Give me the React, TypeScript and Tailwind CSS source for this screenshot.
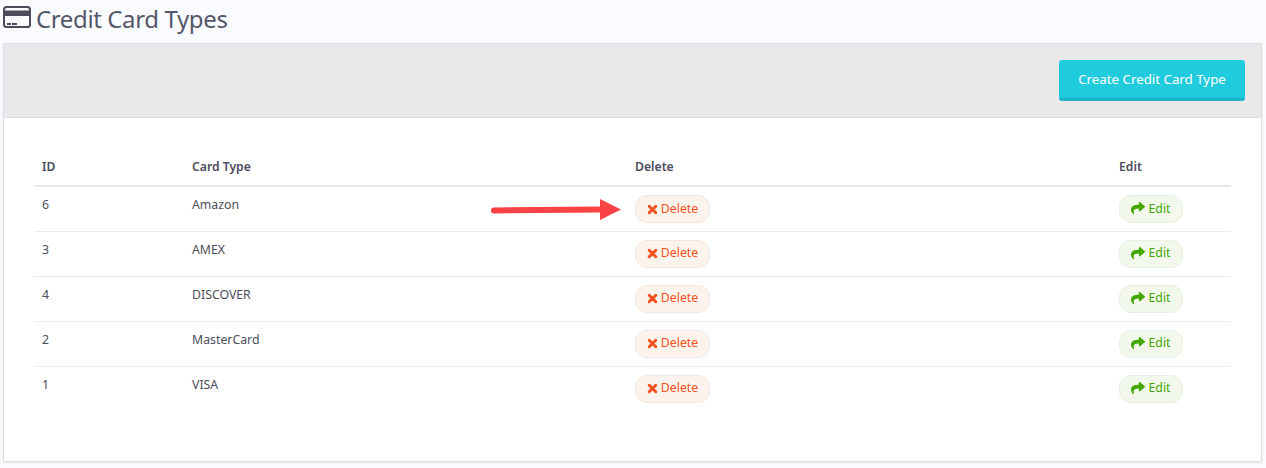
import { FaShare } from 'react-icons/fa';

const rows = [
  { id: 6, type: 'Amazon' },
  { id: 3, type: 'AMEX' },
  { id: 4, type: 'DISCOVER' },
  { id: 2, type: 'MasterCard' },
  { id: 1, type: 'VISA' },
];

function CardIcon() {
  return (
    <svg viewBox="0 0 28 22" className="h-[22px] w-[28px] shrink-0">
      <rect x="1" y="1" width="26" height="20" rx="2.5" fill="none" stroke="#4b4d5c" strokeWidth="2" />
      <rect x="1" y="4.5" width="26" height="5.5" fill="#4b4d5c" />
      <rect x="4" y="17" width="4" height="2" fill="#4b4d5c" />
      <rect x="9" y="17" width="5" height="2" fill="#4b4d5c" />
    </svg>
  );
}

function CrossIcon() {
  return (
    <svg viewBox="0 0 12 12" className="h-[11px] w-[11px] shrink-0">
      <path d="M2.4 2.4 L9.6 9.6 M9.6 2.4 L2.4 9.6" stroke="currentColor" strokeWidth="3.2" strokeLinecap="round" />
    </svg>
  );
}

function ArrowMark() {
  return (
    <svg viewBox="0 0 132 22" className="absolute left-[490px] top-[199px] h-[22px] w-[132px]">
      <path d="M4 11.5 L110 10.5" stroke="#fb4245" strokeWidth="6" strokeLinecap="round" fill="none" />
      <polygon points="110,0 131,10.5 110,21" fill="#fb4245" />
    </svg>
  );
}

export default function App() {
  return (
    <div className="relative h-[468px] w-[1266px] overflow-hidden bg-[#f9fbfe] font-['Noto_Sans',sans-serif] text-[#4b4d5c]">
      <div className="flex h-[43px] items-start gap-[5px] pl-[3px] pt-[6px]">
        <CardIcon />
        <h1 className="text-[24px] leading-[26px] font-normal tracking-[-0.38px] text-[#55576a]">Credit Card Types</h1>
      </div>

      <div className="ml-[3px] h-[419px] w-[1259px] border border-[#dcdfe3] bg-white shadow-[0_1px_3px_rgba(0,0,0,0.08)]">
        <div className="flex h-[74px] items-center justify-end border-b border-[#dedede] bg-[#e9e9e9] pr-[16px]">
          <button
            type="button"
            className="h-[41px] w-[186px] rounded-[3px] border-b-[3px] border-[#1cb3c4] bg-[#20cbdd] pt-[2px] text-[13.3px] text-white"
          >
            Create Credit Card Type
          </button>
        </div>

        <div className="px-[30px] pt-[30px]">
          <table className="w-[1197px] table-fixed border-collapse text-left text-[12.3px]">
            <thead>
              <tr className="h-[38px] border-b-2 border-[#e9e9e9] text-[12.2px] font-semibold">
                <th className="w-[150px] pl-[8px] pt-[2px] font-semibold">ID</th>
                <th className="w-[443px] pl-[8px] pt-[2px] font-semibold">Card Type</th>
                <th className="w-[484px] pl-[8px] pt-[2px] font-semibold">Delete</th>
                <th className="pl-[8px] pt-[2px] font-semibold">Edit</th>
              </tr>
            </thead>
            <tbody>
              {rows.map((row) => (
                <tr key={row.id} className="h-[45px] border-b border-[#ececec] last:border-b-0">
                  <td className="pl-[8px] align-top pt-[9px] leading-[18px]">{row.id}</td>
                  <td className="pl-[8px] align-top pt-[9px] leading-[18px]">{row.type}</td>
                  <td className="pl-[8px] align-top pt-[8px]">
                    <button
                      type="button"
                      className="flex h-[28px] w-[75px] items-center justify-center gap-[3px] rounded-[12px] border border-[#f5e6dd] bg-[#fdf3ed] text-[12.3px] text-[#f4511e]"
                    >
                      <CrossIcon />
                      Delete
                    </button>
                  </td>
                  <td className="pl-[8px] align-top pt-[8px]">
                    <button
                      type="button"
                      className="flex h-[28px] w-[64px] items-center justify-center gap-[3px] rounded-[12px] border border-[#e8f0e0] bg-[#f3f8ec] text-[12.3px] text-[#43a700]"
                    >
                      <FaShare className="h-[14px] w-[14px] shrink-0 -translate-y-[1px]" />
                      Edit
                    </button>
                  </td>
                </tr>
              ))}
            </tbody>
          </table>
        </div>
      </div>

      <ArrowMark />
    </div>
  );
}
